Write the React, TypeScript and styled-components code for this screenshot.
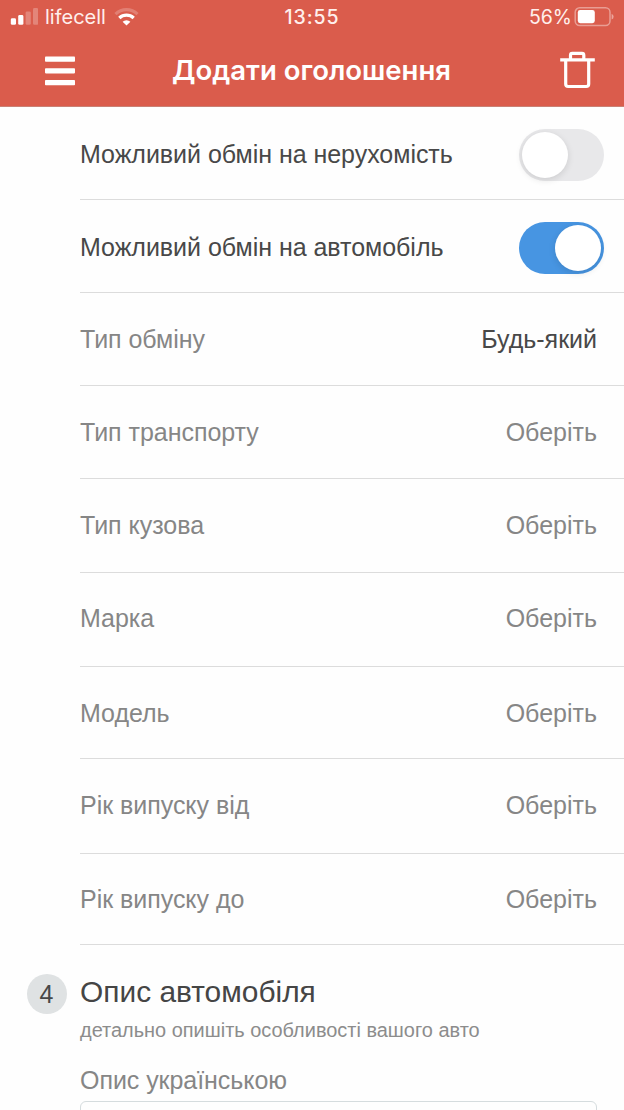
import React from 'react';
import styled, { createGlobalStyle } from 'styled-components';

const GlobalStyle = createGlobalStyle`
  * { box-sizing: border-box; }
  body {
    margin: 0;
    background: #fff;
    font-family: "Liberation Sans", Arial, sans-serif;
    overflow: hidden;
  }
`;

const Screen = styled.div`
  width: 624px;
  height: 1110px;
  overflow: hidden;
  display: flex;
  flex-direction: column;
  background: #fefefe;
`;

const Header = styled.header`
  flex: none;
  height: 107px;
  background: #da5c4c;
  border-bottom: 1px solid #c98175;
  color: #fff;
  font-family: Inter, "Liberation Sans", sans-serif;
`;

const StatusBar = styled.div`
  display: grid;
  grid-template-columns: 1fr auto 1fr;
  align-items: center;
  height: 34px;
  padding: 0 10px 0 10px;
  color: #ffefec;
`;

const StatusGroup = styled.div<{ $end?: boolean }>`
  display: flex;
  align-items: center;
  justify-content: ${(p) => (p.$end ? 'flex-end' : 'flex-start')};
`;

const StatusText = styled.span<{ $size: number; $weight?: number; $spacing?: number }>`
  font-size: ${(p) => p.$size}px;
  font-weight: ${(p) => p.$weight ?? 400};
  letter-spacing: ${(p) => p.$spacing ?? 0}px;
  line-height: 34px;
  white-space: nowrap;
`;

const Carrier = styled(StatusText)`
  margin: 0 8px 0 7px;
`;

const Charge = styled(StatusText)`
  margin-right: 2px;
`;

const NavBar = styled.div`
  display: grid;
  grid-template-columns: 100px 1fr 100px;
  align-items: center;
  height: 72px;
`;

const NavButton = styled.button<{ $end?: boolean }>`
  display: flex;
  justify-content: ${(p) => (p.$end ? 'flex-end' : 'flex-start')};
  padding: ${(p) => (p.$end ? '0 29px 0 0' : '2px 0 0 45px')};
  border: 0;
  background: none;
  color: inherit;
`;

const Title = styled.h1`
  margin: 0;
  padding-right: 1px;
  font-size: 27.5px;
  line-height: 72px;
  font-weight: 600;
  text-align: center;
  white-space: nowrap;
`;

const List = styled.div`
  flex: none;
  padding-left: 80px;
`;

const Row = styled.div<{ $height: number; $inset?: number }>`
  display: flex;
  align-items: flex-start;
  justify-content: space-between;
  height: ${(p) => p.$height}px;
  border-bottom: 1px solid #dcdcdc;
  padding: ${(p) => p.$inset ?? 31}px 20px 0 0;
`;

const ToggleRow = styled(Row)`
  padding-top: 22px;
`;

const Label = styled.span<{ $dark?: boolean }>`
  font-size: 25px;
  line-height: 30px;
  letter-spacing: -0.03px;
  color: ${(p) => (p.$dark ? '#484848' : '#868686')};
  white-space: nowrap;
`;

const ToggleLabel = styled(Label)`
  margin-top: 10px;
`;

const Value = styled(Label)`
  margin-right: 7px;
  letter-spacing: 0;
`;

const Toggle = styled.span<{ $on?: boolean }>`
  display: flex;
  justify-content: ${(p) => (p.$on ? 'flex-end' : 'flex-start')};
  width: 85px;
  height: 52px;
  padding: 3px;
  border-radius: 26px;
  background: ${(p) => (p.$on ? '#4795e2' : '#e8e8ea')};
`;

const Knob = styled.span`
  width: 46px;
  height: 46px;
  border-radius: 50%;
  background: #fff;
  box-shadow: 0 2px 7px rgba(0, 0, 0, 0.12);
`;

const Section = styled.section`
  display: grid;
  grid-template-columns: 53px 1fr;
  padding: 27px 27px 0 27px;
`;

const StepBadge = styled.div`
  display: flex;
  align-items: center;
  justify-content: center;
  width: 40px;
  height: 40px;
  margin-top: 2px;
  padding-right: 1px;
  border-radius: 50%;
  background: #dfe2e3;
  color: #484848;
  font-size: 25px;
`;

const SectionTitle = styled.h2`
  margin: 0;
  font-size: 29.9px;
  line-height: 40px;
  font-weight: 400;
  color: #454545;
`;

const Hint = styled.p`
  margin: 6px 0 0;
  font-size: 19.95px;
  line-height: 24px;
  color: #8c8c8c;
  white-space: nowrap;
`;

const FieldLabel = styled.label`
  display: block;
  margin-top: 23px;
  font-size: 25px;
  line-height: 30px;
  letter-spacing: -0.05px;
  color: #868686;
`;

const TextArea = styled.div`
  height: 120px;
  margin-top: 6px;
  border: 1px solid #d5dcde;
  border-radius: 6px;
`;

const SignalIcon = () => (
  <svg width="28" height="18" viewBox="0 0 28 18" fill="#fff">
    <rect x="0.8" y="10.3" width="5.2" height="6.5" rx="1.4" />
    <rect x="8.2" y="7" width="5.2" height="9.8" rx="1.4" />
    <rect x="15.6" y="3.4" width="5.2" height="13.4" rx="1.4" opacity="0.25" />
    <rect x="23" y="0" width="5.2" height="16.8" rx="1.4" opacity="0.25" />
  </svg>
);

const WifiIcon = () => (
  <svg width="25" height="18" viewBox="0 0 25 18" fill="none" stroke="#fff">
    <path d="M1.5 6.1A16 16 0 0 1 23.5 6.1" strokeWidth="3.2" opacity="0.22" />
    <path d="M5.3 10A10.6 10.6 0 0 1 19.7 10" strokeWidth="3.3" />
    <path d="M12.5 17.6L8.6 13.7A5.7 5.7 0 0 1 16.4 13.7Z" fill="#fff" stroke="none" />
  </svg>
);

const BatteryIcon = () => (
  <svg width="40" height="20" viewBox="0 0 40 20">
    <rect x="1.2" y="0.8" width="34.8" height="17.8" rx="4.5" fill="none" stroke="#fff" strokeWidth="1.5" opacity="0.4" />
    <rect x="3.8" y="3" width="17" height="13.2" rx="2.4" fill="#fff" />
    <path d="M37.6 6.8Q39.6 7.6 39.6 9.7T37.6 12.6Z" fill="#fff" opacity="0.45" />
  </svg>
);

const MenuIcon = () => (
  <svg width="30" height="30" viewBox="0 0 30 30" fill="#fff">
    <rect y="0.5" width="30" height="5.2" rx="0.8" />
    <rect y="12.2" width="30" height="5.2" rx="0.8" />
    <rect y="24" width="30" height="5.2" rx="0.8" />
  </svg>
);

const TrashIcon = () => (
  <svg width="36" height="38" viewBox="0 0 36 38" fill="none" stroke="#fff" strokeWidth="3.2" strokeLinejoin="round">
    <path d="M1.2 8.9H35.8" />
    <path d="M11.5 9V4.2Q11.5 2.4 13.3 2.4H23Q24.8 2.4 24.8 4.2V9" />
    <path d="M6.7 9V33Q6.7 35.5 9.2 35.5H27.2Q29.7 35.5 29.7 33V9" />
  </svg>
);

const toggles = [
  { label: 'Можливий обмін на нерухомість', on: false, height: 93 },
  { label: 'Можливий обмін на автомобіль', on: true, height: 93 },
];

const fields = [
  { label: 'Тип обміну', value: 'Будь-який', height: 93, filled: true },
  { label: 'Тип транспорту', value: 'Оберіть', height: 93 },
  { label: 'Тип кузова', value: 'Оберіть', height: 94 },
  { label: 'Марка', value: 'Оберіть', height: 94, inset: 30 },
  { label: 'Модель', value: 'Оберіть', height: 92 },
  { label: 'Рік випуску від', value: 'Оберіть', height: 95 },
  { label: 'Рік випуску до', value: 'Оберіть', height: 91, inset: 30 },
];

export default function App() {
  return (
    <Screen>
      <GlobalStyle />
      <Header>
        <StatusBar>
          <StatusGroup>
            <SignalIcon />
            <Carrier $size={20}>lifecell</Carrier>
            <WifiIcon />
          </StatusGroup>
          <StatusText $size={19.5} $weight={500} $spacing={0.9}>13:55</StatusText>
          <StatusGroup $end>
            <Charge $size={19.5}>56%</Charge>
            <BatteryIcon />
          </StatusGroup>
        </StatusBar>
        <NavBar>
          <NavButton aria-label="Меню"><MenuIcon /></NavButton>
          <Title>Додати оголошення</Title>
          <NavButton $end aria-label="Видалити"><TrashIcon /></NavButton>
        </NavBar>
      </Header>
      <List>
        {toggles.map((t) => (
          <ToggleRow key={t.label} $height={t.height}>
            <ToggleLabel $dark>{t.label}</ToggleLabel>
            <Toggle $on={t.on}><Knob /></Toggle>
          </ToggleRow>
        ))}
        {fields.map((f) => (
          <Row key={f.label} $height={f.height} $inset={f.inset}>
            <Label>{f.label}</Label>
            <Value $dark={f.filled}>{f.value}</Value>
          </Row>
        ))}
      </List>
      <Section>
        <StepBadge>4</StepBadge>
        <div>
          <SectionTitle>Опис автомобіля</SectionTitle>
          <Hint>детально опишіть особливості вашого авто</Hint>
          <FieldLabel>Опис українською</FieldLabel>
          <TextArea />
        </div>
      </Section>
    </Screen>
  );
}
